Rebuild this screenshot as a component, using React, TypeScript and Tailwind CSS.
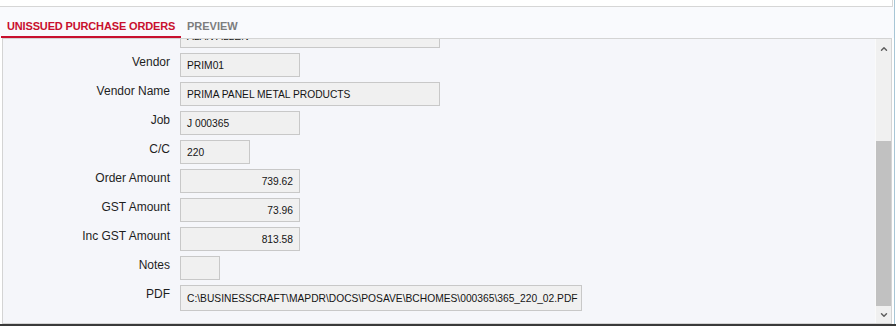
import { ChevronDown, ChevronUp } from 'lucide-react';

type Field = {
  label: string;
  value: string;
  width: string;
  right?: boolean;
  tall?: boolean;
};

// first row sits scrolled up under the tab strip
const fields: Field[] = [
  { label: '', value: 'ALAN ALLEN', width: 'w-[260px]' },
  { label: 'Vendor', value: 'PRIM01', width: 'w-[120px]' },
  { label: 'Vendor Name', value: 'PRIMA PANEL METAL PRODUCTS', width: 'w-[260px]' },
  { label: 'Job', value: 'J 000365', width: 'w-[120px]' },
  { label: 'C/C', value: '220', width: 'w-[70px]' },
  { label: 'Order Amount', value: '739.62', width: 'w-[120px]', right: true },
  { label: 'GST Amount', value: '73.96', width: 'w-[120px]', right: true },
  { label: 'Inc GST Amount', value: '813.58', width: 'w-[120px]', right: true },
  { label: 'Notes', value: '', width: 'w-[40px]' },
  {
    label: 'PDF',
    value: 'C:\\BUSINESSCRAFT\\MAPDR\\DOCS\\POSAVE\\BCHOMES\\000365\\365_220_02.PDF',
    width: 'w-[402px]',
    tall: true,
  },
];

export default function App() {
  return (
    <div className="w-[896px] h-[326px] bg-white overflow-hidden flex flex-col font-['Liberation_Sans',Arial,sans-serif]">
      <div className="flex flex-1 min-h-0">
        <div className="w-[894px] flex flex-col">
          {/* top strip */}
          <div className="w-[893px] h-[7px] bg-white border-b border-r border-[#d6d6d6]" />

          {/* tabs */}
          <div className="h-[31px] bg-[#f9fafd] flex pl-px">
            <div className="w-[180px] h-full pt-[13px] pl-[6px] border-b-2 border-[#c8102e] text-[11px] leading-[13px] font-bold text-[#c8102e] whitespace-nowrap tracking-[-0.15px]">
              UNISSUED PURCHASE ORDERS
            </div>
            <div className="h-full pt-[13px] pl-[6px] text-[11px] leading-[13px] font-bold text-[#7d7d7d]">
              PREVIEW
            </div>
          </div>

          {/* panel */}
          <div className="ml-[2px] w-[890px] flex-1 min-h-0 flex border border-[#d4d4d4] bg-[#f5f6fa]">
            <div className="flex-1 overflow-hidden">
              <div className="mt-[-15px] grid grid-cols-[167px_1fr] gap-x-[10px] gap-y-[5px]">
                {fields.map((f, i) => (
                  <div key={i} className="contents">
                    <div className="text-right text-[12px] leading-[14px] pt-[2px] text-[#1e1e1e]">
                      {f.label}
                    </div>
                    <div
                      className={`${f.width} ${f.tall ? 'h-[26px]' : 'h-[24px]'} bg-[#f0f0f0] border border-[#c8c8c8] flex items-center pt-px px-[6px] text-[10.25px] text-[#141414] whitespace-nowrap ${
                        f.right ? 'justify-end' : ''
                      }`}
                    >
                      {f.value}
                    </div>
                  </div>
                ))}
              </div>
            </div>

            {/* scrollbar */}
            <div className="w-[16px] flex flex-col bg-[#f0f0f0] border-l border-[#fafafa]">
              <div className="h-[19px] flex items-center justify-center">
                <ChevronUp className="w-[10px] h-[10px] text-[#5f5f5f]" strokeWidth={3.5} />
              </div>
              <div className="h-[83px]" />
              <div className="h-[165px] bg-[#c1c1c1]" />
              <div className="flex-1 flex items-center justify-center">
                <ChevronDown className="w-[10px] h-[10px] text-[#5f5f5f]" strokeWidth={3.5} />
              </div>
            </div>
          </div>
        </div>
        <div className="w-px bg-[#a7c6d6]" />
        <div className="w-px bg-white" />
      </div>
      <div className="h-[2px] bg-[#3a3a3a]" />
    </div>
  );
}
